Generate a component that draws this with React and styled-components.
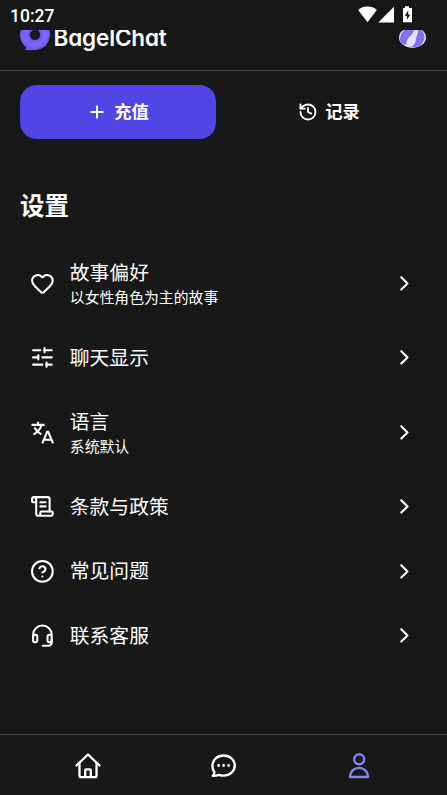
import React from 'react'
import styled, { createGlobalStyle } from 'styled-components'
import {
  ChevronRight,
  CircleHelp,
  Heart,
  History,
  Plus,
  ScrollText,
  SlidersHorizontal,
} from 'lucide-react'

const settings = [
  { icon: Heart, title: '故事偏好', desc: '以女性角色为主的故事' },
  { icon: SlidersHorizontal, title: '聊天显示' },
  { icon: TranslateIcon, title: '语言', desc: '系统默认' },
  { icon: ScrollText, title: '条款与政策' },
  { icon: CircleHelp, title: '常见问题' },
  { icon: HeadsetIcon, title: '联系客服' },
]

export default function App() {
  return (
    <Screen>
      <GlobalStyle />
      <StatusBar>
        <Time>10:27</Time>
        <StatusIcons />
      </StatusBar>
      <Header>
        <Brand>
          <BrandMark />
          <BrandName>BagelChat</BrandName>
        </Brand>
        <Avatar />
      </Header>
      <Main>
        <Actions>
          <ActionButton $primary>
            <Plus size={20} strokeWidth={2.3} />
            <ActionLabel>充值</ActionLabel>
          </ActionButton>
          <ActionButton>
            <History size={20} strokeWidth={2.2} />
            <ActionLabel>记录</ActionLabel>
          </ActionButton>
        </Actions>
        <Heading>设置</Heading>
        <List>
          {settings.map(({ icon: Icon, title, desc }) => (
            <Row key={title} $tall={Boolean(desc)}>
              <Icon size={24.8} />
              <RowText>
                <RowTitle>{title}</RowTitle>
                {desc && <RowDesc>{desc}</RowDesc>}
              </RowText>
              <ChevronRight size={24.8} />
            </Row>
          ))}
        </List>
      </Main>
      <TabBar>
        <Tab><HomeIcon /></Tab>
        <Tab><ChatIcon /></Tab>
        <Tab $active><UserIcon /></Tab>
      </TabBar>
    </Screen>
  )
}

function StatusIcons() {
  return (
    <svg width="56" height="18" viewBox="0 0 56 18" fill="#fff">
      <path d="M9.5 17.3 0.2 5C2.6 2.7 5.8 1.6 9.5 1.6S16.4 2.7 18.8 5Z" />
      <path d="M20.3 17.5 36 1.8V17.5Z" />
      <path d="M47 1.2h4v1.7h3v14.4h-9V2.9h2Z" />
      <path d="M50.2 5.5 46.7 10.7h2.2v4.1l3.5-5.3h-2.2Z" fill="#181818" />
    </svg>
  )
}

function BrandMark() {
  return (
    <svg width="31" height="20" viewBox="0 0 31 20">
      <defs>
        <radialGradient id="bagel" gradientUnits="userSpaceOnUse" cx="15" cy="5" r="15">
          <stop offset="0.3" stopColor="#6c50e8" />
          <stop offset="0.65" stopColor="#8066ff" />
          <stop offset="1" stopColor="#7059ed" />
        </radialGradient>
      </defs>
      <path d="M.8 0h28.6c.5 1.4.6 2.8.6 4.5C30 13 23.5 19.9 15 19.9H5c1.2-.9 1.4-1.9.9-3C2 14 0 9.5 0 4.5 0 2.8.3 1.4.8 0Z" fill="url(#bagel)" />
      <path d="M11.5 1.2 13.5 0h4A5.3 5.3 0 1 1 10 6.5c-.6-2 0-4 1.5-5.3Z" fill="#181818" />
    </svg>
  )
}

function Avatar() {
  return (
    <svg width="27" height="21" viewBox="0 0 27 21">
      <defs>
        <clipPath id="avatar">
          <ellipse cx="13.5" cy="10.5" rx="13.5" ry="10.4" />
        </clipPath>
      </defs>
      <g clipPath="url(#avatar)">
        <path d="M0 0h27v21H0Z" fill="#e4dffb" />
        <path d="M1 13C1 8 3 4 7.5 2H15C14.5 8 10 9 8.5 12.5 7.5 14.5 7.500 16 7 18 3 17.500 1 15.5 1 13Z" fill="#8270ef" />
        <path d="M19 1.5c4 1.5 6.500 4.500 6.500 8.5 0 5-4 9-8 10-1.500.5-4.500.5-6 0 4-1.500 5-4.500 5.500-8C17.500 8.500 20 6 19 1.500Z" fill="#8270ef" />
      </g>
    </svg>
  )
}

function LineIcon({ size, children }) {
  return (
    <svg
      width={size}
      height={size}
      viewBox="0 0 24 24"
      fill="none"
      stroke="currentColor"
      strokeWidth="2"
      strokeLinecap="round"
      strokeLinejoin="round"
    >
      {children}
    </svg>
  )
}

function TranslateIcon({ size }) {
  return (
    <LineIcon size={size}>
      <g strokeLinecap="butt" strokeLinejoin="miter">
        <path d="M1.5 4.7h12.6M7.8 1.8v3M11.3 4.7C10.3 8.5 7.5 11.500 3.300 14.200M4.300 7.200c1.500 3 3.800 5 6.700 6.800" />
        <path d="m11.9 22.7 4.7-11.2h1l4.7 11.2M13.7 19.2h6.8" />
      </g>
    </LineIcon>
  )
}

function HeadsetIcon({ size }) {
  return (
    <LineIcon size={size}>
      <path d="M3 11.5h2.5A1.5 1.5 0 0 1 7 13v4a1.5 1.5 0 0 1-1.5 1.5h-1A1.5 1.5 0 0 1 3 17v-5.5a9 9 0 0 1 18 0V17a1.5 1.5 0 0 1-1.5 1.5h-1A1.5 1.5 0 0 1 17 17v-4a1.5 1.5 0 0 1 1.5-1.5H21" />
      <path d="M21 16v3a3 3 0 0 1-3 3h-5.500" />
    </LineIcon>
  )
}

function HomeIcon() {
  return (
    <svg width="26" height="26" viewBox="0 0 26 26" fill="none" stroke="currentColor" strokeWidth="2.3" strokeLinecap="round" strokeLinejoin="round">
      <path d="M1.5 12.5 13 1.5l11.5 11" />
      <path d="M4.5 10.5v12.3c0 .9.5 1.4 1.4 1.4h14.2c.9 0 1.4-.5 1.4-1.4V10.5" />
      <path d="M10.2 24v-6.5c0-.8.4-1.2 1.2-1.2h3.2c.8 0 1.2.4 1.2 1.2V24" />
    </svg>
  )
}

function ChatIcon() {
  return (
    <svg width="26" height="26" viewBox="0 0 26 26" fill="none" stroke="currentColor" strokeWidth="2.3" strokeLinecap="round" strokeLinejoin="round">
      <path d="M12.6 2.5c6.3 0 11.2 4.2 11.2 9.9s-4.9 10.2-11.2 10.2c-1.7 0-3.2-.3-4.6-.8-1.7.8-3.9 1.2-6.3 1.1 1-.9 1.7-2.2 1.7-3.7-1.3-1.8-2-4.2-2-6.5 0-6 4.900-10.200 11.200-10.200Z" />
      <path d="M7.6 12.500h.01M12.600 12.500h.01M17.600 12.500h.01" strokeWidth="2.8" />
    </svg>
  )
}

function UserIcon() {
  return (
    <svg width="26" height="26" viewBox="0 0 26 26" fill="none" stroke="currentColor" strokeWidth="2.4" strokeLinejoin="round">
      <circle cx="13.2" cy="6.3" r="5" />
      <path d="M4 24c0-5.3 4-9.1 9-9.1s9 3.8 9 9.1Z" />
    </svg>
  )
}

const GlobalStyle = createGlobalStyle`
  * {
    box-sizing: border-box;
  }
  body {
    margin: 0;
    background: #181818;
    color: #fff;
    font-family: Roboto, "Noto Sans CJK SC", sans-serif;
  }
`

const Screen = styled.div`
  display: flex;
  flex-direction: column;
  height: 100vh;
  overflow: hidden;
  background: #181818;
`

const StatusBar = styled.div`
  display: flex;
  flex: none;
  justify-content: space-between;
  height: 30px;
  padding: 5px 33px 0 10px;
`

const Time = styled.div`
  font-size: 17.5px;
  line-height: 22px;
  font-weight: 500;
`

/* the scrolled header is cut off under the status bar */
const Header = styled.header`
  display: flex;
  flex: none;
  align-items: flex-end;
  justify-content: space-between;
  height: 41px;
  padding: 0 21px 22px 20px;
  overflow: hidden;
  border-bottom: 1px solid #444;
`

const Brand = styled.div`
  display: flex;
  align-items: flex-end;
  gap: 2.5px;
  margin-bottom: -2px;
`

const BrandName = styled.div`
  height: 29px;
  font-family: Inter, sans-serif;
  font-feature-settings: "cv11";
  font-size: 22.5px;
  font-weight: 600;
  line-height: 34px;
  letter-spacing: -0.15px;
`

const Main = styled.main`
  flex: 1;
  padding: 13.5px 20px 0;
`

const Actions = styled.div`
  display: grid;
  grid-template-columns: 1fr 1fr;
  gap: 15px;
`

const ActionButton = styled.button`
  display: flex;
  align-items: center;
  justify-content: center;
  gap: 7px;
  height: 54.5px;
  padding: 0;
  border: 0;
  border-radius: 16.5px;
  background: ${({ $primary }) => ($primary ? '#5046e5' : 'transparent')};
  color: #fff;
  font-family: inherit;
  font-size: 17.3px;
  font-weight: 700;
`

const ActionLabel = styled.span`
  padding-bottom: 3px;
`

const Heading = styled.h2`
  margin: 50px 0 0;
  font-size: 24.5px;
  font-weight: 700;
  line-height: 36px;
`

const List = styled.div`
  margin-top: 15.8px;
`

const Row = styled.div`
  display: flex;
  align-items: center;
  height: ${({ $tall }) => ($tall ? '84.6px' : '64.5px')};
  padding: 0 10px;
`

const RowText = styled.div`
  flex: 1;
  padding: 2px 0 0 15px;
`

const RowTitle = styled.div`
  font-size: 19.8px;
  line-height: 28px;
`

const RowDesc = styled.div`
  font-size: 14.85px;
  line-height: 21px;
`

const TabBar = styled.nav`
  display: flex;
  flex: none;
  height: 61px;
  padding: 1px 20px 0;
  border-top: 1px solid #444;
`

const Tab = styled.div`
  display: flex;
  flex: 1;
  align-items: center;
  justify-content: center;
  color: ${({ $active }) => ($active ? '#8188ee' : '#fff')};
`
